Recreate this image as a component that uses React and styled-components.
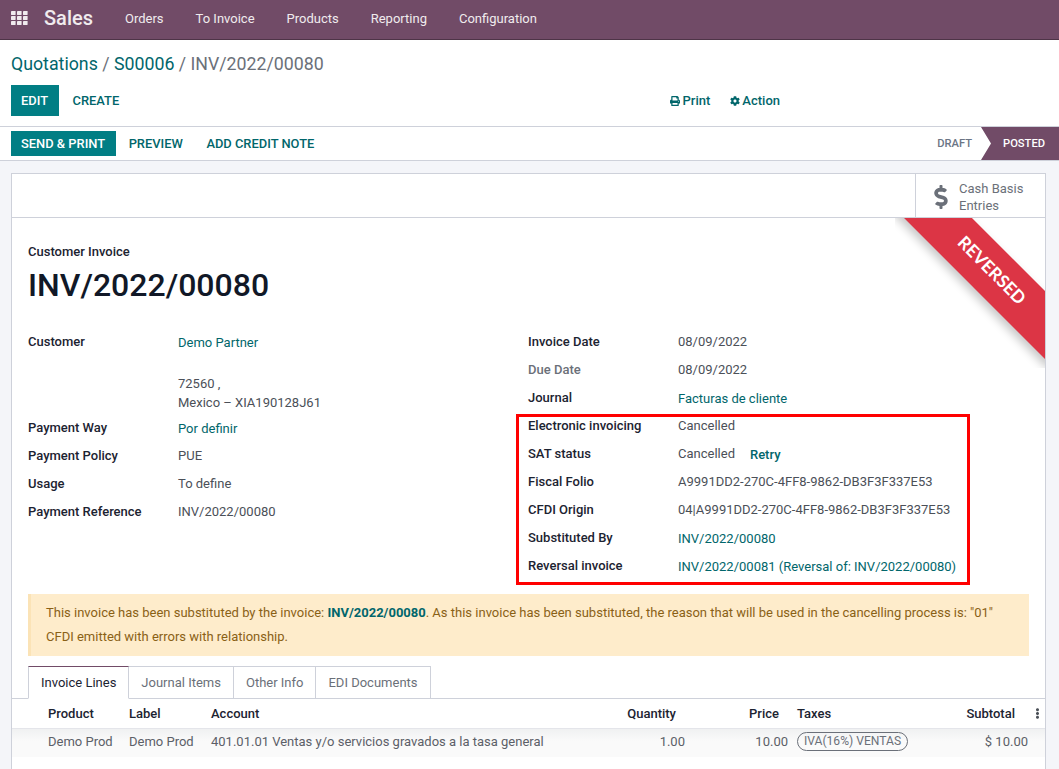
import React from 'react';
import styled, { createGlobalStyle } from 'styled-components';
import { FaPrint, FaCog, FaDollarSign, FaEllipsisV } from 'react-icons/fa';

const GlobalStyle = createGlobalStyle`
  html, body {
    margin: 0;
    height: 100%;
    overflow: hidden;
  }
  body {
    font-family: Roboto, "Noto Sans", sans-serif;
    font-size: 13px;
    color: #4b5058;
    background: #f4f5f9;
  }
  * {
    box-sizing: border-box;
  }
`;

const purple = '#714b67';
const teal = '#017e84';
const link = '#01666b';
const dark = '#1c2331';
const line = '#ced1da';

const Page = styled.div`
  height: 769px;
  display: flex;
  flex-direction: column;
  overflow: hidden;
`;

const Navbar = styled.nav`
  height: 40px;
  flex: none;
  display: flex;
  align-items: center;
  background: ${purple};
  border-bottom: 1px solid #4e3447;
  color: #f0ebee;
  padding: 0 0 3px 11px;
`;

const Brand = styled.span`
  font-size: 20px;
  font-weight: 500;
  margin: 0 32px 0 16px;
`;

const NavLink = styled.a`
  font-size: 13px;
  margin-right: 32px;
`;

const ControlPanel = styled.div`
  background: #fff;
  height: 87px;
  flex: none;
  padding: 0 11px;
  border-bottom: 1px solid ${line};
`;

const Breadcrumb = styled.div`
  font-size: 17.75px;
  line-height: 21px;
  padding-top: 14px;
  height: 45px;
  color: #6b7079;
  a {
    color: ${link};
  }
`;

const ButtonRow = styled.div`
  display: flex;
  align-items: center;
`;

const Button = styled.button`
  border: 0;
  background: ${(p) => (p.$primary ? teal : 'transparent')};
  color: ${(p) => (p.$primary ? '#fff' : link)};
  font: 500 12.9px Roboto, sans-serif;
  height: ${(p) => p.$height || 31}px;
  padding: 0 10.5px 0 10px;
  margin: 0 ${(p) => p.$gap || 0}px 0 0;
  text-transform: uppercase;
`;

const MenuGroup = styled.div`
  margin-left: auto;
  margin-right: 268px;
  display: flex;
  gap: 19.5px;
`;

const MenuLink = styled.a`
  display: flex;
  align-items: center;
  gap: 2.5px;
  color: ${link};
  font-weight: 500;
  font-size: 13px;
  svg {
    font-size: 10px;
  }
`;

const StatusRow = styled.div`
  background: #fff;
  height: 34px;
  flex: none;
  padding-left: 11px;
  display: flex;
  align-items: center;
  border-bottom: 1px solid ${line};
`;

const Statusbar = styled.div`
  margin-left: auto;
  display: flex;
  height: 100%;
  align-items: center;
`;

const Stage = styled.span`
  font-size: 11.2px;
  font-weight: 500;
  color: #6b7585;
  margin-right: 9px;
`;

const ActiveStage = styled.span`
  height: 100%;
  width: 78px;
  display: flex;
  align-items: center;
  padding-left: 22px;
  background: ${purple};
  color: #fff;
  font-size: 11.2px;
  font-weight: 500;
  clip-path: polygon(0 0, 100% 0, 100% 100%, 0 100%, 10px 50%);
`;

const Sheet = styled.main`
  position: relative;
  margin: 12px 13px 0 11px;
  flex: 1;
  background: #fff;
  border: 1px solid ${line};
  border-bottom: 0;
`;

const ButtonBox = styled.div`
  height: 44px;
  display: flex;
  justify-content: flex-end;
  border-bottom: 1px solid ${line};
`;

const StatButton = styled.div`
  width: 130px;
  border-left: 1px solid ${line};
  display: flex;
  align-items: center;
  gap: 6px;
  padding: 2px 0 0 13px;
  color: #6b7079;
  line-height: 17px;
  svg {
    font-size: 24px;
    flex: none;
  }
`;

const RibbonClip = styled.div`
  position: absolute;
  top: 44px;
  right: 0;
  width: 150px;
  height: 150px;
  overflow: hidden;
  pointer-events: none;
`;

const Ribbon = styled.div`
  position: absolute;
  top: 29px;
  left: -14px;
  width: 220px;
  height: 48px;
  padding-bottom: 3px;
  display: flex;
  align-items: center;
  justify-content: center;
  transform: rotate(45deg);
  background: #dc3545;
  color: #fff;
  font: 700 17.5px Lato, sans-serif;
  box-shadow: 0 5px 10px rgba(0, 0, 0, 0.22);
`;

const Body = styled.div`
  padding: 26px 16px 0;
`;

const Kind = styled.div`
  color: ${dark};
  font-weight: 500;
  line-height: 15px;
`;

const Title = styled.h1`
  margin: 7px 0 23px;
  color: #111827;
  font-size: 32px;
  font-weight: 500;
  line-height: 38px;
`;

const Columns = styled.div`
  display: grid;
  grid-template-columns: 500px 1fr;
`;

const Field = styled.div`
  display: grid;
  grid-template-columns: 150px 1fr;
  align-items: center;
  height: 28px;
`;

const AddressField = styled(Field)`
  height: auto;
  align-items: start;
  margin-bottom: 1px;
`;

const Label = styled.span`
  font-weight: 500;
  color: ${(p) => (p.$muted ? '#6b7079' : dark)};
`;

const TopLabel = styled(Label)`
  padding-top: 7px;
`;

const Value = styled.span`
  color: #4b5058;
`;

const ValueLink = styled.a`
  color: ${link};
  position: relative;
  top: 1px;
`;

const Address = styled.div`
  line-height: 19px;
  padding-top: 5px;
  ${ValueLink} {
    display: block;
    margin-bottom: 23px;
  }
`;

const Retry = styled.a`
  color: ${link};
  font-weight: 500;
  margin-left: 15px;
  position: relative;
  top: 1px;
`;

const Highlight = styled.div`
  position: relative;
  &::after {
    content: '';
    position: absolute;
    top: 3px;
    bottom: -6px;
    left: -12px;
    width: 448px;
    border: 3px solid #f00;
    pointer-events: none;
  }
`;

const Alert = styled.div`
  margin-top: 15px;
  background: #feeccb;
  border-left: 3px solid #fbe3b6;
  color: #8a6116;
  line-height: 24px;
  padding: 7px 15px;
  height: 62px;
  a {
    color: ${link};
    font-weight: 700;
  }
`;

const Tabs = styled.div`
  margin: 10px -16px 0;
  padding-left: 16px;
  display: flex;
  height: 33px;
  border-bottom: 1px solid ${line};
`;

const Tab = styled.a`
  height: 33px;
  padding: 8px 12px 0;
  line-height: 15px;
  background: #fff;
  border: 1px solid ${line};
  border-left-width: ${(p) => (p.$active ? 1 : 0)}px;
  border-bottom-color: ${(p) => (p.$active ? '#fff' : line)};
  border-top-color: ${(p) => (p.$active ? purple : line)};
  color: ${(p) => (p.$active ? dark : '#6b7079')};
`;

const Lines = styled.table`
  margin: 0 -16px;
  width: calc(100% + 32px);
  table-layout: fixed;
  border-collapse: collapse;
`;

const Head = styled.th`
  height: 29px;
  font-weight: 500;
  color: ${dark};
  text-align: ${(p) => (p.$right ? 'right' : 'left')};
  padding: 0 ${(p) => p.$pad || 4}px 0 4px;
  border-bottom: 1px solid #e4e5ea;
`;

const Cell = styled.td`
  height: 29px;
  text-align: ${(p) => (p.$right ? 'right' : 'left')};
  padding: 0 4px 2px;
  white-space: nowrap;
  color: #5c6068;
`;

const TaxCell = styled(Cell)`
  padding-left: 5px;
`;

const TaxHead = styled(Head)`
  padding-left: 5px;
`;

const Row = styled.tr`
  background: linear-gradient(#eff0f1, #fafafa 45%);
`;

const Tag = styled.span`
  display: inline-block;
  border: 1px solid #6b7079;
  border-radius: 10px;
  line-height: 17px;
  padding: 0 6px;
  font-size: 12.1px;
  color: #6b7079;
`;

const Kebab = styled(FaEllipsisV)`
  font-size: 11px;
  color: #4b5058;
  display: block;
  margin-left: -4px;
`;

const AppsIcon = () => (
  <svg width="17" height="15" viewBox="0 0 17 15" fill="#f0ebee">
    {[0, 6, 12].map((x) =>
      [0, 5, 10].map((y) => <rect key={`${x}-${y}`} x={x} y={y} width="4.6" height="4" rx="0.4" />)
    )}
  </svg>
);

const navItems = ['Orders', 'To Invoice', 'Products', 'Reporting', 'Configuration'];

const App = () => {
  return (
    <Page>
      <GlobalStyle />
      <Navbar>
        <AppsIcon />
        <Brand>Sales</Brand>
        {navItems.map((item) => (
          <NavLink key={item}>{item}</NavLink>
        ))}
      </Navbar>

      <ControlPanel>
        <Breadcrumb>
          <a>Quotations</a> / <a>S00006</a> / INV/2022/00080
        </Breadcrumb>
        <ButtonRow>
          <Button $primary $gap={4}>Edit</Button>
          <Button>Create</Button>
          <MenuGroup>
            <MenuLink><FaPrint /> Print</MenuLink>
            <MenuLink><FaCog /> Action</MenuLink>
          </MenuGroup>
        </ButtonRow>
      </ControlPanel>

      <StatusRow>
        <Button $primary $height={25} $gap={3}>Send &amp; Print</Button>
        <Button $height={25} $gap={3}>Preview</Button>
        <Button $height={25}>Add Credit Note</Button>
        <Statusbar>
          <Stage>DRAFT</Stage>
          <ActiveStage>POSTED</ActiveStage>
        </Statusbar>
      </StatusRow>

      <Sheet>
        <ButtonBox>
          <StatButton>
            <FaDollarSign />
            <span>Cash Basis<br />Entries</span>
          </StatButton>
        </ButtonBox>
        <RibbonClip>
          <Ribbon>REVERSED</Ribbon>
        </RibbonClip>

        <Body>
          <Kind>Customer Invoice</Kind>
          <Title>INV/2022/00080</Title>

          <Columns>
            <div>
              <AddressField>
                <TopLabel>Customer</TopLabel>
                <Address>
                  <ValueLink>Demo Partner</ValueLink>
                  <Value>72560 ,</Value>
                  <br />
                  <Value>Mexico – XIA190128J61</Value>
                </Address>
              </AddressField>
              <Field><Label>Payment Way</Label><ValueLink>Por definir</ValueLink></Field>
              <Field><Label>Payment Policy</Label><Value>PUE</Value></Field>
              <Field><Label>Usage</Label><Value>To define</Value></Field>
              <Field><Label>Payment Reference</Label><Value>INV/2022/00080</Value></Field>
            </div>
            <div>
              <Field><Label>Invoice Date</Label><Value>08/09/2022</Value></Field>
              <Field><Label $muted>Due Date</Label><Value>08/09/2022</Value></Field>
              <Field><Label>Journal</Label><ValueLink>Facturas de cliente</ValueLink></Field>
              <Highlight>
                <Field><Label>Electronic invoicing</Label><Value>Cancelled</Value></Field>
                <Field>
                  <Label>SAT status</Label>
                  <span><Value>Cancelled</Value><Retry>Retry</Retry></span>
                </Field>
                <Field><Label>Fiscal Folio</Label><Value>A9991DD2-270C-4FF8-9862-DB3F3F337E53</Value></Field>
                <Field><Label>CFDI Origin</Label><Value>04|A9991DD2-270C-4FF8-9862-DB3F3F337E53</Value></Field>
                <Field><Label>Substituted By</Label><ValueLink>INV/2022/00080</ValueLink></Field>
                <Field><Label>Reversal invoice</Label><ValueLink>INV/2022/00081 (Reversal of: INV/2022/00080)</ValueLink></Field>
              </Highlight>
            </div>
          </Columns>

          <Alert>
            This invoice has been substituted by the invoice: <a>INV/2022/00080</a>. As this invoice has been substituted, the reason that will be used in the cancelling process is: "01"
            <br />
            CFDI emitted with errors with relationship.
          </Alert>

          <Tabs>
            <Tab $active>Invoice Lines</Tab>
            <Tab>Journal Items</Tab>
            <Tab>Other Info</Tab>
            <Tab>EDI Documents</Tab>
          </Tabs>

          <Lines>
            <colgroup>
              <col width="32" />
              <col width="81" />
              <col width="82" />
              <col width="380" />
              <col width="102" />
              <col width="103" />
              <col width="136" />
              <col width="104" />
              <col />
            </colgroup>
            <thead>
              <tr>
                <Head />
                <Head>Product</Head>
                <Head>Label</Head>
                <Head>Account</Head>
                <Head $right $pad={13}>Quantity</Head>
                <Head $right $pad={13}>Price</Head>
                <TaxHead>Taxes</TaxHead>
                <Head $right $pad={17}>Subtotal</Head>
                <Head><Kebab /></Head>
              </tr>
            </thead>
            <tbody>
              <Row>
                <Cell />
                <Cell>Demo Prod</Cell>
                <Cell>Demo Prod</Cell>
                <Cell>401.01.01 Ventas y/o servicios gravados a la tasa general</Cell>
                <Cell $right>1.00</Cell>
                <Cell $right>10.00</Cell>
                <TaxCell><Tag>IVA(16%) VENTAS</Tag></TaxCell>
                <Cell $right>$ 10.00</Cell>
                <Cell />
              </Row>
            </tbody>
          </Lines>
        </Body>
      </Sheet>
    </Page>
  );
};

export default App;
